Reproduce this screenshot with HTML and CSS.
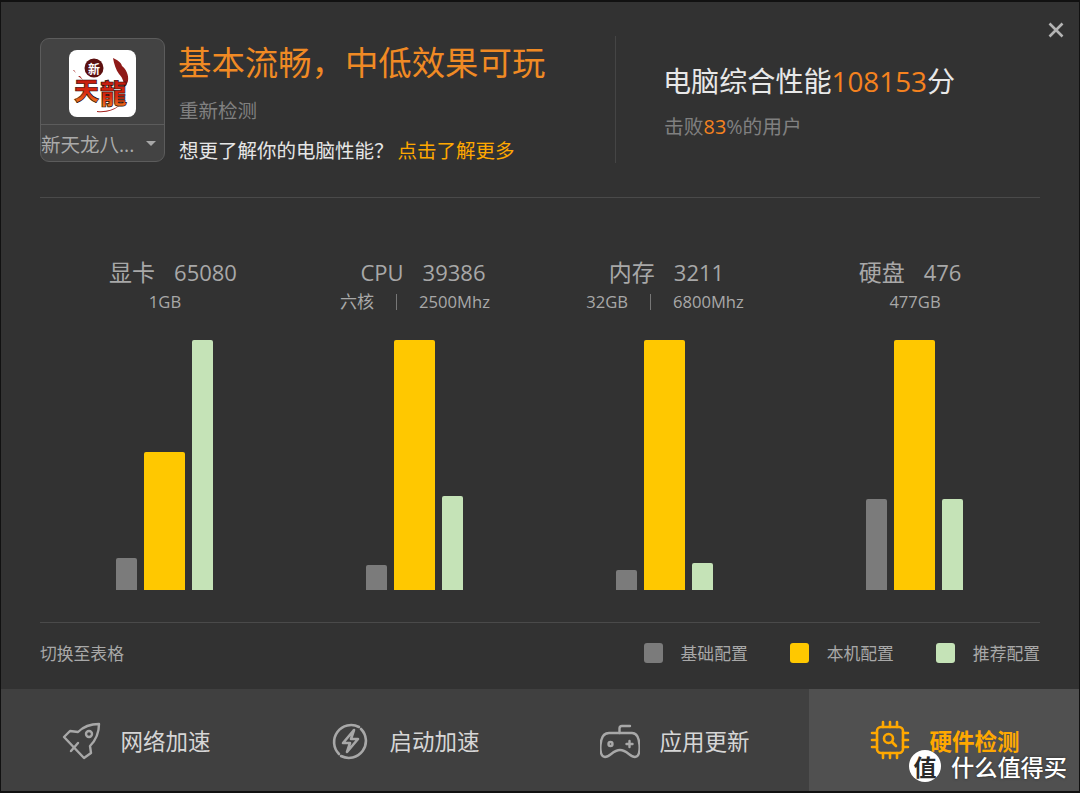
FILE: index.html
```html
<!DOCTYPE html>
<html lang="zh-CN">
<head>
<meta charset="utf-8">
<title>硬件检测</title>
<link rel="stylesheet" href="styles.css">
</head>
<body>
<div class="app">
  <button class="close" aria-label="关闭"><svg width="16" height="16" viewBox="0 0 16 16"><path d="M1.5 1.5l13 13M14.5 1.5l-13 13" stroke="#b4b4b4" stroke-width="2.6" fill="none"/></svg></button>
  <main class="main">
    <header class="header">
      <div class="game">
        <div class="game-top">
          <div class="logo">
            <svg width="67" height="67" viewBox="0 0 67 67">
              <defs>
                <linearGradient id="fire" x1="0" y1="0" x2="0" y2="1">
                  <stop offset="0" stop-color="#b8120c"/>
                  <stop offset=".6" stop-color="#d92a10"/>
                  <stop offset="1" stop-color="#f59a20"/>
                </linearGradient>
              </defs>
              <path d="M44 8c4 2 8 4 9 8 4 3 7 9 6 15-1 3-2 5-4 6 0-6-2-10-5-13-3-4-5-10-6-16z" fill="#8f1a18"/>
              <path d="M14 30l-5-4 2 0zM7 23l-3-3 1 0zM28 61c8 1 16-1 23-6-5 5-13 8-23 7z" fill="#a52420"/>
              <circle cx="25" cy="18" r="9.500" fill="#5c1010"/>
              <text x="19" y="24" class="logo-xin">新</text>
              <text x="5" y="50" class="logo-tian">天</text>
              <text x="31" y="54" class="logo-long">龍</text>
            </svg>
          </div>
        </div>
        <div class="game-select">
          <span>新天龙八...</span>
          <i class="caret"></i>
        </div>
      </div>
      <div class="verdict">
        <h1>基本流畅，中低效果可玩</h1>
        <a class="retest">重新检测</a>
        <p class="more">想更了解你的电脑性能？<a>点击了解更多</a></p>
      </div>
      <div class="score">
        <div class="score-main">电脑综合性能<em>108153</em>分</div>
        <div class="score-sub">击败<em>83</em>%的用户</div>
      </div>
    </header>

    <section class="chart">
      <div class="group">
        <div class="g-title shift-a"><span class="cjk">显卡</span><span>65080</span></div>
        <div class="g-sub"><span>1GB</span></div>
        <div class="bars">
          <div class="bar base" style="height:32px"></div>
          <div class="bar mine" style="height:138px"></div>
          <div class="bar rec" style="height:250px"></div>
        </div>
      </div>
      <div class="group">
        <div class="g-title shift-a"><span>CPU</span><span>39386</span></div>
        <div class="g-sub"><span class="cjk-sub">六核</span><i></i><span>2500Mhz</span></div>
        <div class="bars">
          <div class="bar base" style="height:25px"></div>
          <div class="bar mine" style="height:250px"></div>
          <div class="bar rec" style="height:94px"></div>
        </div>
      </div>
      <div class="group">
        <div class="g-title shift-b"><span class="cjk">内存</span><span>3211</span></div>
        <div class="g-sub"><span>32GB</span><i></i><span>6800Mhz</span></div>
        <div class="bars">
          <div class="bar base" style="height:20px"></div>
          <div class="bar mine" style="height:250px"></div>
          <div class="bar rec" style="height:27px"></div>
        </div>
      </div>
      <div class="group">
        <div class="g-title shift-c"><span class="cjk">硬盘</span><span>476</span></div>
        <div class="g-sub"><span>477GB</span></div>
        <div class="bars">
          <div class="bar base" style="height:91px"></div>
          <div class="bar mine" style="height:250px"></div>
          <div class="bar rec" style="height:91px"></div>
        </div>
      </div>
    </section>

    <section class="legend-row">
      <a class="switch">切换至表格</a>
      <div class="legend">
        <span class="item"><i class="swatch base"></i>基础配置</span>
        <span class="item"><i class="swatch mine"></i>本机配置</span>
        <span class="item"><i class="swatch rec"></i>推荐配置</span>
      </div>
    </section>
  </main>

  <nav class="nav">
    <a class="tab">
      <svg width="40" height="40" viewBox="0 0 40 40" fill="none" stroke="#a8a8a8" stroke-width="2.400" stroke-linejoin="round" stroke-linecap="round">
        <path d="M3 17l6-6 8 1C23 6 31 4 38 4c0 8-3 16-9 22l1 7-7 5z"/>
        <circle cx="28" cy="14" r="3"/>
        <path d="M17 23l-7 8"/>
      </svg>
      <span>网络加速</span>
    </a>
    <a class="tab">
      <svg width="40" height="40" viewBox="0 0 40 40" fill="none" stroke="#a8a8a8" stroke-width="2.600" stroke-linejoin="round" stroke-linecap="round">
        <path d="M29 7A17 17 0 0 0 9 34"/>
        <path d="M11 36a17 17 0 0 0 20-27"/>
        <path d="M24 10L13 23h7l-3 9 11-13h-7z"/>
      </svg>
      <span>启动加速</span>
    </a>
    <a class="tab">
      <svg width="40" height="40" viewBox="0 0 40 40" fill="none" stroke="#a8a8a8" stroke-width="2.400" stroke-linejoin="round" stroke-linecap="round">
        <path d="M9 13h23c5 0 7 5 7.500 12 .5 6-.5 12-4.500 12-5 0-8-7-15-7s-10 7-15 7c-4 0-5-6-4.500-12C1 18 3 13 9 13z"/>
        <path d="M19.500 13V8.500C19.500 7 20.500 6 22 6h8"/>
        <circle cx="10.500" cy="24" r="2"/>
        <path d="M29.500 21v6M26.500 24h6"/>
      </svg>
      <span>应用更新</span>
    </a>
    <a class="tab active">
      <svg width="40" height="40" viewBox="0 0 40 40" fill="none" stroke="#ffa800" stroke-width="2.600" stroke-linejoin="round" stroke-linecap="round">
        <rect x="7" y="7" width="26" height="26" rx="4"/>
        <path d="M13 2v5M20 2v5M27 2v5M13 33v5M20 33v5M27 33v5M2 13h5M2 20h5M2 27h5M33 13h5M33 20h5M33 27h5"/>
        <circle cx="18.500" cy="18.500" r="4.500"/>
        <path d="M22 22l4 4"/>
      </svg>
      <span>硬件检测</span>
    </a>
  </nav>

  <div class="watermark">
    <span class="wm-badge">值</span>
    <span class="wm-text">什么值得买</span>
  </div>
</div>
</body>
</html>
```
FILE: styles.css
```css
* { box-sizing: border-box; }
html, body { margin: 0; padding: 0; }
body {
  width: 1080px;
  height: 793px;
  overflow: hidden;
  background: #000;
  font-family: "Open Sans", "Noto Sans CJK SC", sans-serif;
}
em { font-style: normal; }
.app {
  position: relative;
  width: 1080px;
  height: 793px;
  background: #323232;
  border: solid #111;
  border-width: 2px 1px 2px 1px;
  display: flex;
  flex-direction: column;
}
.close {
  position: absolute;
  top: 20px;
  right: 15px;
  padding: 0;
  border: 0;
  background: none;
  line-height: 0;
}
.main {
  flex: 1;
  padding: 36px 39px 0;
  display: flex;
  flex-direction: column;
}
.header {
  height: 160px;
  border-bottom: 1px solid #4a4a4a;
  display: flex;
  align-items: flex-start;
}
.game {
  width: 125px;
  height: 124px;
  background: #434343;
  border: 1px solid #5c5c5c;
  border-radius: 9px;
  display: flex;
  flex-direction: column;
}
.game-top {
  height: 89px;
  padding-top: 11px;
  display: flex;
  justify-content: center;
  border-bottom: 1px solid #5c5c5c;
}
.logo {
  width: 67px;
  height: 67px;
  background: #fff;
  border-radius: 8px;
  overflow: hidden;
}
.logo-xin { font: 700 12px "Noto Sans CJK TC", sans-serif; fill: #fff; }
.logo-tian { font: 900 25px "Noto Sans CJK TC", sans-serif; fill: url(#fire); stroke: #1c0c08; stroke-width: .7px; }
.logo-long { font: 900 27px "Noto Sans CJK TC", sans-serif; fill: url(#fire); stroke: #1c0c08; stroke-width: .7px; }
.game-select {
  flex: 1;
  display: flex;
  align-items: center;
  justify-content: space-between;
  padding-right: 8px;
  font-size: 19.500px;
  line-height: 33px;
  color: #aaa;
  white-space: nowrap;
}
.game-select span { margin-top: 3px; }
.caret {
  width: 0;
  height: 0;
  border: 5.500px solid transparent;
  border-top: 5.500px solid #a8a8a8;
  border-bottom: 0;
}
.verdict {
  width: 436px;
  margin-left: 14px;
  display: flex;
  flex-direction: column;
}
.verdict h1 {
  margin: 0 0 0 -1px;
  font-size: 33.400px;
  line-height: 48px;
  font-weight: 400;
  color: #f08a24;
  white-space: nowrap;
}
.retest {
  margin-top: 11px;
  font-size: 19.500px;
  line-height: 28px;
  color: #808080;
}
.more {
  margin: 12px 0 0;
  font-size: 19.500px;
  line-height: 28px;
  color: #e6e6e6;
  white-space: nowrap;
}
.more a {
  margin-left: 4px;
  color: #ffa800;
}
.score {
  height: 127px;
  margin-top: -2px;
  padding: 25px 0 0 47px;
  border-left: 1px solid #454545;
}
.score-main {
  font-size: 28.100px;
  line-height: 40px;
  color: #e8e8e8;
  white-space: nowrap;
}
.score-main em { color: #f5821f; font-size: 27.800px; }
.score-sub em { color: #f5821f; }
.score-sub {
  margin: 12px 0 0 1px;
  font-size: 19.800px;
  line-height: 28px;
  color: #808080;
  white-space: nowrap;
}
.chart {
  height: 425px;
  border-bottom: 1px solid #4a4a4a;
  display: grid;
  grid-template-columns: repeat(4, 250px);
}
.group {
  padding-top: 57px;
  display: flex;
  flex-direction: column;
  align-items: center;
  color: #a8a8a8;
}
.g-title {
  height: 35px;
  display: flex;
  gap: 19px;
  font-size: 22px;
  line-height: 34px;
  white-space: nowrap;
}
.g-title .cjk { font-size: 23px; }
.shift-a { padding-left: 16px; }
.shift-b { padding-left: 3px; }
.shift-c { padding-right: 10px; }
.g-sub {
  height: 24px;
  display: flex;
  align-items: center;
  gap: 22px;
  font-size: 16.600px;
  line-height: 24px;
  white-space: nowrap;
}
.g-sub .cjk-sub { font-size: 17px; }
.g-sub i {
  width: 1px;
  height: 16px;
  background: #777;
}
.bars {
  height: 250px;
  margin: 26px 2px 0 0;
  display: flex;
  align-items: flex-end;
  gap: 7px;
}
.bar { border-radius: 2px 2px 0 0; }
.bar.base, .bar.rec { width: 21px; }
.bar.mine { width: 41px; }
.base { background: #7b7b7b; }
.mine { background: #ffc800; }
.rec { background: #c5e3b7; }
.legend-row {
  flex: 1;
  padding-bottom: 6px;
  display: flex;
  align-items: center;
  justify-content: space-between;
  font-size: 16.800px;
  color: #a8a8a8;
}
.legend { display: flex; gap: 42px; }
.item {
  display: flex;
  align-items: center;
  gap: 18px;
  white-space: nowrap;
}
.swatch {
  width: 19px;
  height: 20px;
  border-radius: 3px;
}
.nav {
  height: 102px;
  display: grid;
  grid-template-columns: 268px 270px 270px 270px;
  background: #404040;
}
.tab {
  display: flex;
  align-items: center;
  justify-content: center;
  gap: 19px;
  padding-left: 2px;
  font-size: 22.500px;
  color: #d6d6d6;
  white-space: nowrap;
}
.tab.active {
  background: #505050;
  color: #ffa800;
  font-weight: 700;
}
.watermark {
  position: absolute;
  right: 12px;
  bottom: 9px;
  display: flex;
  align-items: center;
  gap: 10px;
}
.wm-badge {
  width: 32px;
  height: 32px;
  border-radius: 50%;
  background: #fff;
  color: #2a2a2a;
  font: 700 23px/32px "Noto Sans CJK SC", sans-serif;
  text-align: center;
}
.wm-text {
  font: 500 23.200px/30px "Noto Sans CJK SC", sans-serif;
  color: #fff;
  text-shadow: 0 0 3px rgba(0,0,0,.5);
}
```
